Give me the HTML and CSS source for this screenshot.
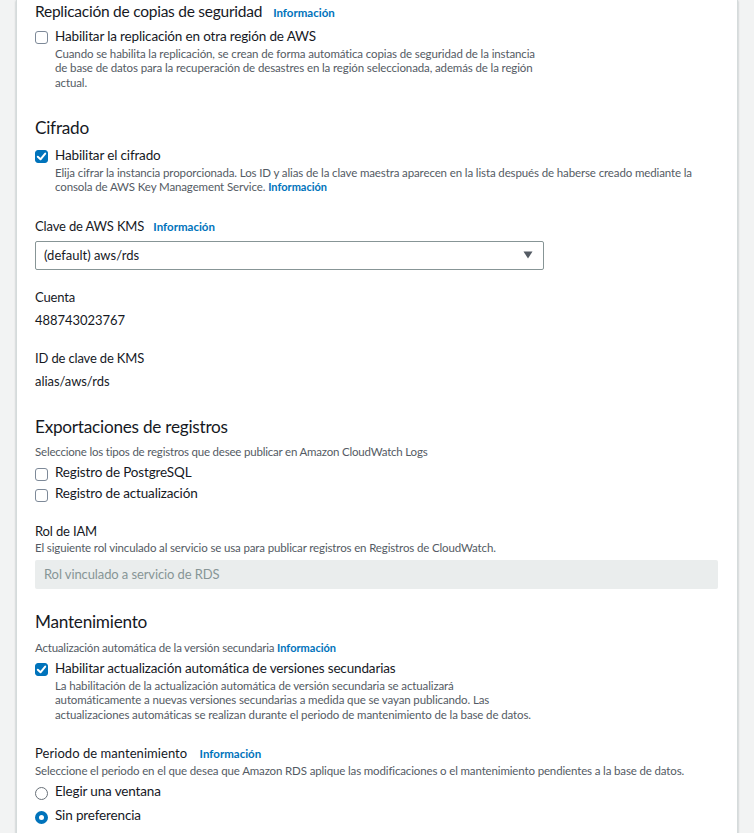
FILE: index.html
```html
<!DOCTYPE html>
<html lang="es">
<head>
<meta charset="utf-8">
<title>Configuración adicional</title>
<link rel="stylesheet" href="styles.css">
</head>
<body>
<div class="panel">
  <section class="sec sec-first">
    <h3 class="h h-small"><span>Replicación de copias de seguridad</span><a class="info">Información</a></h3>
    <div class="check">
      <span class="box"></span>
      <div class="check-body">
        <div class="check-label">Habilitar la replicación en otra región de AWS</div>
        <div class="desc">Cuando se habilita la replicación, se crean de forma automática copias de seguridad de la instancia<br>de base de datos para la recuperación de desastres en la región seleccionada, además de la región<br>actual.</div>
      </div>
    </div>
  </section>

  <section class="sec">
    <h3 class="h"><span>Cifrado</span></h3>
    <div class="check check-enc">
      <span class="box on"><svg viewBox="0 0 13 13" width="13" height="13"><path d="M2.8 6.8 L5.5 9.3 L10.2 3.6" fill="none" stroke="#fff" stroke-width="2" stroke-linecap="round" stroke-linejoin="round"/></svg></span>
      <div class="check-body">
        <div class="check-label">Habilitar el cifrado</div>
        <div class="desc">Elija cifrar la instancia proporcionada. Los ID y alias de la clave maestra aparecen en la lista después de haberse creado mediante la<br>consola de AWS Key Management Service. <a class="info">Información</a></div>
      </div>
    </div>
    <div class="field f-kms">
      <div class="label">Clave de AWS KMS <a class="info">Información</a></div>
      <div class="select"><span>(default) aws/rds</span><svg class="caret" viewBox="0 0 10 8" width="10" height="8"><path d="M0.5 0.5 H9.5 L5 7.5 Z" fill="#545b64"/></svg></div>
    </div>
    <div class="field f-kv">
      <div class="label">Cuenta</div>
      <div class="value">488743023767</div>
    </div>
    <div class="field f-kv f-kv2">
      <div class="label">ID de clave de KMS</div>
      <div class="value">alias/aws/rds</div>
    </div>
  </section>

  <section class="sec sec-logs">
    <h3 class="h"><span>Exportaciones de registros</span></h3>
    <div class="desc lead">Seleccione los tipos de registros que desee publicar en Amazon CloudWatch Logs</div>
    <div class="check simple first"><span class="box"></span><div class="check-label">Registro de PostgreSQL</div></div>
    <div class="check simple second"><span class="box"></span><div class="check-label">Registro de actualización</div></div>
    <div class="field f-iam">
      <div class="label">Rol de IAM</div>
      <div class="desc desc-iam">El siguiente rol vinculado al servicio se usa para publicar registros en Registros de CloudWatch.</div>
      <div class="input-ro">Rol vinculado a servicio de RDS</div>
    </div>
  </section>

  <section class="sec sec-maint">
    <h3 class="h"><span>Mantenimiento</span></h3>
    <div class="desc lead lead-maint">Actualización automática de la versión secundaria <a class="info">Información</a></div>
    <div class="check check-upd">
      <span class="box on"><svg viewBox="0 0 13 13" width="13" height="13"><path d="M2.8 6.8 L5.5 9.3 L10.2 3.6" fill="none" stroke="#fff" stroke-width="2" stroke-linecap="round" stroke-linejoin="round"/></svg></span>
      <div class="check-body">
        <div class="check-label">Habilitar actualización automática de versiones secundarias</div>
        <div class="desc">La habilitación de la actualización automática de versión secundaria se actualizará<br>automáticamente a nuevas versiones secundarias a medida que se vayan publicando. Las<br>actualizaciones automáticas se realizan durante el periodo de mantenimiento de la base de datos.</div>
      </div>
    </div>
    <div class="field f-period">
      <div class="label label-period">Periodo de mantenimiento <a class="info">Información</a></div>
      <div class="desc desc-period">Seleccione el periodo en el que desea que Amazon RDS aplique las modificaciones o el mantenimiento pendientes a la base de datos.</div>
      <div class="radio first"><span class="dot"></span><span class="check-label">Elegir una ventana</span></div>
      <div class="radio"><span class="dot on"></span><span class="check-label">Sin preferencia</span></div>
    </div>
  </section>
</div>
</body>
</html>
```

FILE: styles.css
```css
* { box-sizing: border-box; }
html, body { margin: 0; padding: 0; }
body {
  background: #f2f3f3;
  font-family: Lato, "Noto Sans", sans-serif;
  color: #16191f;
  height: 833px;
  overflow: hidden;
}
.panel {
  margin: 0 16px;
  background: #fff;
  border-left: 1px solid #d5dbdb;
  border-right: 1px solid #d5dbdb;
  box-shadow: 0 1px 2px rgba(0,28,36,.3);
  padding: 0 19px 40px 18px;
  min-height: 900px;
}
.sec { padding-top: 27px; }
.sec-first { padding-top: 0; }
.sec-logs { padding-top: 26.5px; }
.sec-maint { padding-top: 22.5px; }
.h {
  margin: 0;
  font-size: 17.2px;
  letter-spacing: -0.25px;
  font-weight: 400;
  line-height: 22px;
  display: flex;
  align-items: baseline;
  gap: 11px;
}
.h-small { font-size: 15.5px; }
.info {
  color: #0073bb;
  font-weight: 700;
  font-size: 11.5px;
  letter-spacing: 0;
  text-decoration: none;
}
.check {
  display: flex;
  gap: 7px;
  margin-top: 2px;
}
.sec-first .check { margin-top: 3px; }
.check-enc { margin-top: 7px; }
.check-upd { margin-top: 4px; }
.box {
  flex: none;
  width: 13px;
  height: 13px;
  border: 1.5px solid #7d8998;
  border-radius: 3px;
  margin-top: 4px;
  display: block;
  position: relative;
}
.box.on {
  background: #0073bb;
  border-color: #0073bb;
}
.box.on svg { position: absolute; left: -1.5px; top: -1.5px; }
.check-label {
  font-size: 13.5px;
  letter-spacing: -0.15px;
  line-height: 18px;
}
.desc {
  font-size: 11.5px;
  letter-spacing: -0.14px;
  line-height: 14.5px;
  color: #545b64;
}
.desc .info { font-size: 11px; }
.check-body .desc { margin-top: 1.5px; letter-spacing: -0.12px; }
.field { margin-top: 22px; }
.label {
  font-size: 13px;
  letter-spacing: -0.15px;
  line-height: 18px;
}
.label .info { margin-left: 6px; }
.label-period { letter-spacing: 0.05px; }
.label-period .info { margin-left: 9px; }
.select {
  margin-top: 5px;
  width: 509px;
  height: 29px;
  border: 1px solid #879596;
  border-radius: 2px;
  display: flex;
  align-items: center;
  justify-content: space-between;
  padding: 0 10px 0 8px;
  font-size: 13px;
  letter-spacing: 0;
}
.value {
  font-size: 13px;
  letter-spacing: -0.05px;
  line-height: 18px;
  margin-top: 5px;
}
.f-kv { margin-top: 18px; }
.f-kv2 { margin-top: 20px; }
.lead { margin-top: 6.5px; letter-spacing: -0.2px; }
.lead-maint { margin-top: 7.5px; }
.check.simple { margin-top: 0; }
.check.simple.first { margin-top: 4px; }
.check.simple.second { margin-top: 2px; }
.check.simple .check-label { line-height: 19px; }
.check.simple .box { margin-top: 4.5px; }
.f-iam { margin-top: 19px; }
.desc-iam { margin-top: 1px; }
.input-ro {
  margin-top: 4px;
  height: 29px;
  background: #eaeded;
  border-radius: 2px;
  display: flex;
  align-items: center;
  padding: 0 9px;
  font-size: 13px;
  letter-spacing: -0.1px;
  color: #879596;
}
.f-period { margin-top: 21.5px; }
.desc-period { margin-top: 1px; }
.radio {
  display: flex;
  align-items: flex-start;
  gap: 7px;
  margin-top: 4px;
}
.radio.first { margin-top: 2.5px; }
.radio .check-label { line-height: 20px; }
.dot {
  width: 13px;
  height: 13px;
  margin-top: 6px;
  border: 1.5px solid #687078;
  border-radius: 50%;
  flex: none;
}
.dot.on { border: 4px solid #0073bb; }
```
